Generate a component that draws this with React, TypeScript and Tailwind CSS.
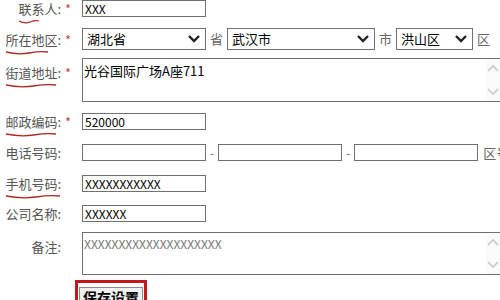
import React from 'react';

const cn = '"Noto Sans CJK SC", "Liberation Sans", sans-serif';

const Underline = ({ w }: { w: number }) => (
  <svg className="absolute left-0 top-full mt-[1px]" width={w} height="6" viewBox={`0 0 ${w} 6`}>
    <path d={`M1 2 Q ${w * 0.3} 5 ${w * 0.55} 3 T ${w - 1} 2`} stroke="#b3261e" strokeWidth="1.3" fill="none" />
  </svg>
);

const Label = ({ text, required, line }: { text: string; required?: boolean; line?: number }) => (
  <>
    <div className="w-[61px] shrink-0 text-right text-[13px] leading-[17px] text-[#555]">
      <span className="relative">
        {text}
        {line ? <Underline w={line} /> : null}
      </span>
    </div>
    <div className="mr-[7px] w-[14px] shrink-0 text-center text-[12px] leading-[17px] text-[#c0392b]">{required ? '*' : ''}</div>
  </>
);

const Input = ({ value, w = 124 }: { value?: string; w?: number }) => (
  <div
    className="h-[17px] shrink-0 border border-[#707070] bg-white px-[2px] text-[12px] leading-[15px] text-black"
    style={{ width: w }}
  >
    {value}
  </div>
);

const Chevron = () => (
  <svg width="14" height="10" viewBox="0 0 14 10">
    <path d="M2 2 L7 7 L12 2" stroke="#222" strokeWidth="2.4" fill="none" />
  </svg>
);

const Select = ({ value, w }: { value: string; w: number }) => (
  <div
    className="flex h-[22px] shrink-0 items-center justify-between border border-[#707070] bg-white pl-[4px] pr-[4px] text-[13px] text-black"
    style={{ width: w }}
  >
    <span>{value}</span>
    <Chevron />
  </div>
);

const ScrollArrows = () => (
  <div className="flex w-[14px] flex-col items-center justify-between bg-[#fafafa] py-[5px]">
    <svg width="12" height="8" viewBox="0 0 12 8">
      <path d="M1 7 L6 2 L11 7" stroke="#c8c8c8" strokeWidth="1.6" fill="none" />
    </svg>
    <svg width="12" height="8" viewBox="0 0 12 8">
      <path d="M1 1 L6 6 L11 1" stroke="#c8c8c8" strokeWidth="1.6" fill="none" />
    </svg>
  </div>
);

const Unit = ({ t }: { t: string }) => <span className="px-[4px] text-[13px] text-[#666]">{t}</span>;

export default function App() {
  return (
    <div className="h-[300px] w-[500px] overflow-hidden bg-white" style={{ fontFamily: cn }}>
      {/* 联系人 */}
      <div className="flex h-[17px] items-center">
        <Label text="联系人:" required line={22} />
        <Input value="XXX" />
      </div>

      {/* 所在地区 */}
      <div className="mt-[11px] flex h-[22px] items-center">
        <Label text="所在地区:" required line={44} />
        <Select value="湖北省" w={124} />
        <Unit t="省" />
        <Select value="武汉市" w={148} />
        <Unit t="市" />
        <Select value="洪山区" w={77} />
        <Unit t="区" />
      </div>

      {/* 街道地址 */}
      <div className="mt-[8px] flex h-[44px]">
        <div className="flex pt-[6px]">
          <Label text="街道地址:" required line={52} />
        </div>
        <div className="flex flex-1 border-y border-l border-[#707070]">
          <div className="flex-1 px-[1px] pt-[3px] text-[13px] leading-[17px] text-black">光谷国际广场A座711</div>
          <ScrollArrows />
        </div>
      </div>

      {/* 邮政编码 */}
      <div className="mt-[11px] flex h-[17px] items-center">
        <Label text="邮政编码:" required line={52} />
        <Input value="520000" />
      </div>

      {/* 电话号码 */}
      <div className="mt-[14px] flex h-[17px] items-center whitespace-nowrap">
        <Label text="电话号码:" />
        <Input />
        <span className="px-[4px] text-[12px] text-[#666]">-</span>
        <Input />
        <span className="px-[4px] text-[12px] text-[#666]">-</span>
        <Input />
        <span className="pl-[5px] text-[13px] text-[#666]">区号</span>
      </div>

      {/* 手机号码 */}
      <div className="mt-[14px] flex h-[17px] items-center">
        <Label text="手机号码:" line={56} />
        <Input value="XXXXXXXXXXX" />
      </div>

      {/* 公司名称 */}
      <div className="mt-[13px] flex h-[17px] items-center">
        <Label text="公司名称:" />
        <Input value="XXXXXX" />
      </div>

      {/* 备注 */}
      <div className="mt-[10px] flex h-[43px]">
        <div className="flex pt-[6px]">
          <Label text="备注:" />
        </div>
        <div className="flex flex-1 border-y border-l border-[#707070]">
          <div className="flex-1 px-[1px] pt-[3px] text-[12px] leading-[15px] text-[#777]">XXXXXXXXXXXXXXXXXXXX</div>
          <ScrollArrows />
        </div>
      </div>

      {/* 保存设置 */}
      <div className="mt-[5px] pl-[75px]">
        <div className="inline-block border-[3px] border-[#c4161c] p-[1px]">
          <button className="border border-[#888] bg-[#f0f0f0] px-[3px] text-[14px] font-bold leading-[18px] text-black">
            保存设置
          </button>
        </div>
      </div>
    </div>
  );
}
